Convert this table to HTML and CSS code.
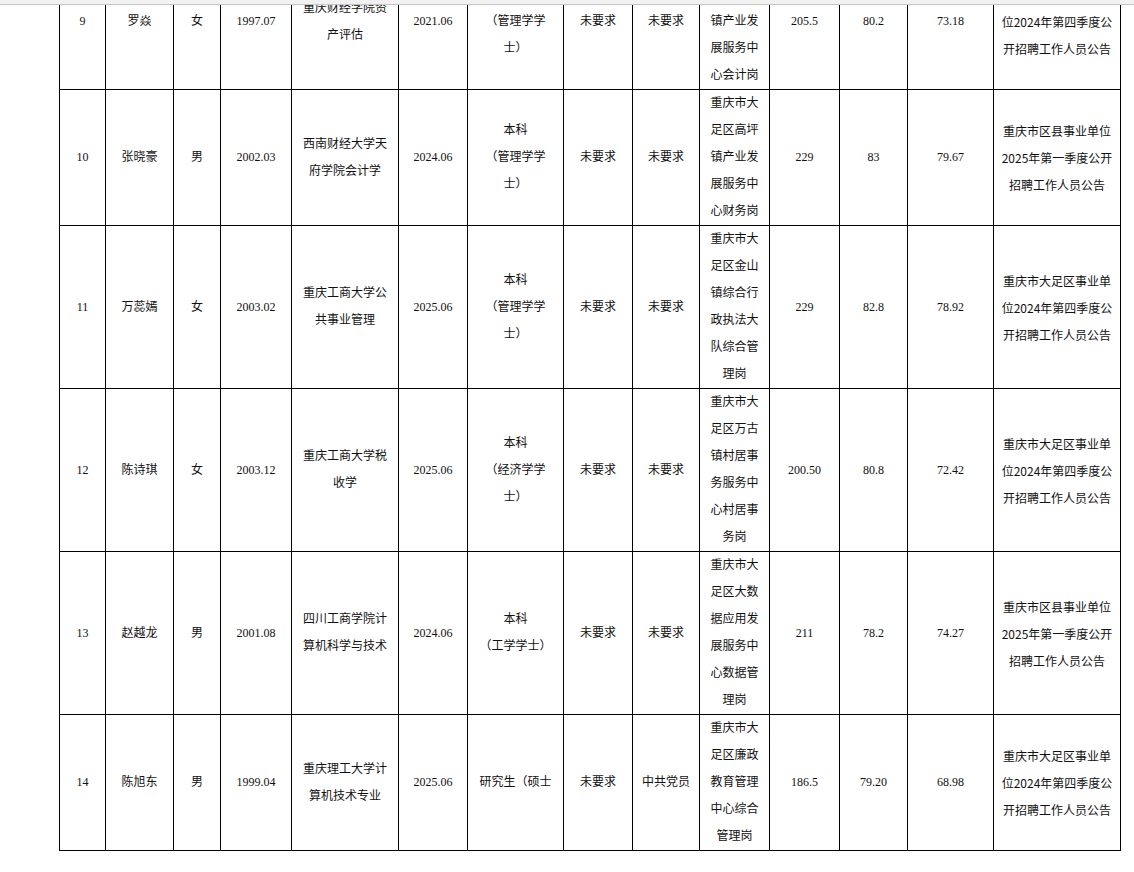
FILE: index.html
```html
<!DOCTYPE html>
<html lang="zh-CN">
<head>
<meta charset="utf-8">
<title>拟聘用人员名单</title>
<link rel="stylesheet" href="styles.css">
</head>
<body>
<div class="topbar"></div>
<div class="page">
<table class="list">
<colgroup>
<col class="c1"><col class="c2"><col class="c3"><col class="c4"><col class="c5"><col class="c6"><col class="c7"><col class="c8"><col class="c9"><col class="c10"><col class="c11"><col class="c12"><col class="c13"><col class="c14">
</colgroup>
<tbody>
<tr>
<td>9</td><td>罗焱</td><td>女</td><td>1997.07</td>
<td>重庆财经学院资<br>产评估</td><td>2021.06</td>
<td>本科<br>（管理学学<br>士）</td><td>未要求</td><td>未要求</td>
<td>重庆市大<br>足区高坪<br>镇产业发<br>展服务中<br>心会计岗</td>
<td>205.5</td><td>80.2</td><td>73.18</td>
<td class="sans">重庆市大足区事业单<br>位2024年第四季度公<br>开招聘工作人员公告</td>
</tr>
<tr>
<td>10</td><td>张晓豪</td><td>男</td><td>2002.03</td>
<td>西南财经大学天<br>府学院会计学</td><td>2024.06</td>
<td>本科<br>（管理学学<br>士）</td><td>未要求</td><td>未要求</td>
<td>重庆市大<br>足区高坪<br>镇产业发<br>展服务中<br>心财务岗</td>
<td>229</td><td>83</td><td>79.67</td>
<td class="sans">重庆市区县事业单位<br>2025年第一季度公开<br>招聘工作人员公告</td>
</tr>
<tr>
<td>11</td><td>万蕊嫣</td><td>女</td><td>2003.02</td>
<td>重庆工商大学公<br>共事业管理</td><td>2025.06</td>
<td>本科<br>（管理学学<br>士）</td><td>未要求</td><td>未要求</td>
<td>重庆市大<br>足区金山<br>镇综合行<br>政执法大<br>队综合管<br>理岗</td>
<td>229</td><td>82.8</td><td>78.92</td>
<td class="sans">重庆市大足区事业单<br>位2024年第四季度公<br>开招聘工作人员公告</td>
</tr>
<tr>
<td>12</td><td>陈诗琪</td><td>女</td><td>2003.12</td>
<td>重庆工商大学税<br>收学</td><td>2025.06</td>
<td>本科<br>（经济学学<br>士）</td><td>未要求</td><td>未要求</td>
<td>重庆市大<br>足区万古<br>镇村居事<br>务服务中<br>心村居事<br>务岗</td>
<td>200.50</td><td>80.8</td><td>72.42</td>
<td class="sans">重庆市大足区事业单<br>位2024年第四季度公<br>开招聘工作人员公告</td>
</tr>
<tr>
<td>13</td><td>赵越龙</td><td>男</td><td>2001.08</td>
<td>四川工商学院计<br>算机科学与技术</td><td>2024.06</td>
<td>本科<br>（工学学士）</td><td>未要求</td><td>未要求</td>
<td>重庆市大<br>足区大数<br>据应用发<br>展服务中<br>心数据管<br>理岗</td>
<td>211</td><td>78.2</td><td>74.27</td>
<td class="sans">重庆市区县事业单位<br>2025年第一季度公开<br>招聘工作人员公告</td>
</tr>
<tr>
<td>14</td><td>陈旭东</td><td>男</td><td>1999.04</td>
<td>重庆理工大学计<br>算机技术专业</td><td>2025.06</td>
<td>研究生（硕士</td><td>未要求</td><td>中共党员</td>
<td>重庆市大<br>足区廉政<br>教育管理<br>中心综合<br>管理岗</td>
<td>186.5</td><td>79.20</td><td>68.98</td>
<td class="sans">重庆市大足区事业单<br>位2024年第四季度公<br>开招聘工作人员公告</td>
</tr>
</tbody>
</table>
</div>
</body>
</html>
```
FILE: styles.css
```css
html, body {
  margin: 0;
  padding: 0;
  background: #ffffff;
}

body {
  font-family: "Liberation Serif", "Noto Sans CJK SC", serif;
  color: #111111;
  overflow: hidden;
}

.topbar {
  position: fixed;
  top: 0;
  left: 0;
  right: 0;
  height: 4px;
  background: #f1f1f1;
  border-bottom: 1px solid #c6c6c6;
  z-index: 2;
}

.page {
  padding-left: 59px;
}

.list {
  margin-top: -47px;
  border-collapse: collapse;
  table-layout: fixed;
  width: 1062px;
  border: 1px solid #000;
}

.list td {
  border: 1px solid #000;
  padding: 0;
  text-align: center;
  vertical-align: middle;
  font-size: 12px;
  line-height: 27px;
  white-space: nowrap;
  overflow: hidden;
}

.list td.sans {
  font-family: "Noto Sans CJK SC", sans-serif;
}

.c1 { width: 46px; }
.c2 { width: 68px; }
.c3 { width: 47px; }
.c4 { width: 71px; }
.c5 { width: 107px; }
.c6 { width: 69px; }
.c7 { width: 96px; }
.c8 { width: 69px; }
.c9 { width: 67px; }
.c10 { width: 70px; }
.c11 { width: 70px; }
.c12 { width: 68px; }
.c13 { width: 86px; }
.c14 { width: 127px; }
```
